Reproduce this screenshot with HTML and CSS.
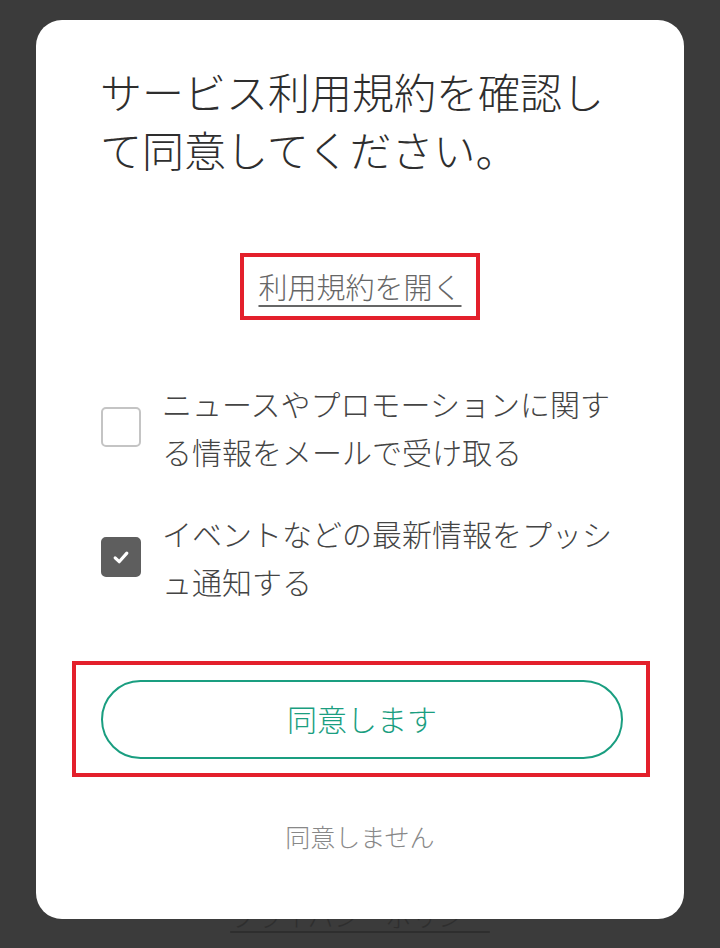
FILE: index.html
```html
<!DOCTYPE html>
<html lang="ja">
<head>
  <meta charset="UTF-8">
  <title>利用規約の確認</title>
  <link rel="stylesheet" href="styles.css">
</head>
<body>

  <div class="backdrop-page">
    <a class="policy-link">プライバシーポリシー</a>
  </div>

  <div class="terms-dialog">
    <h1>サービス利用規約を確認して同意してください。</h1>

    <div class="open-terms">
      <span class="highlight-box"><a class="terms-link">利用規約を開く</a></span>
    </div>

    <div class="option-list">
      <label class="option">
        <span class="check"></span>
        <span class="option-text">ニュースやプロモーションに関する情報をメールで受け取る</span>
      </label>
      <label class="option">
        <span class="check checked">
          <svg viewBox="0 0 16 16" width="18" height="18"><path d="M2.8 8.8 L6.4 12.2 L13.2 4.6" fill="none" stroke="#fff" stroke-width="2.8" stroke-linecap="round" stroke-linejoin="round"/></svg>
        </span>
        <span class="option-text">イベントなどの最新情報をプッシュ通知する</span>
      </label>
    </div>

    <div class="agree-box">
      <button class="agree-btn">同意します</button>
    </div>

    <button class="decline-btn">同意しません</button>
  </div>

</body>
</html>
```

FILE: styles.css
```css
html, body {
  margin: 0;
  height: 100%;
  font-family: "Noto Sans CJK JP", "Noto Sans", sans-serif;
  font-weight: 300;
  background-color: #3b3b3b;
  color: #333;
  overflow: hidden;
}

body {
  position: relative;
}

.backdrop-page {
  position: absolute;
  left: 0;
  right: 0;
  top: 898px;
  text-align: center;
}

.policy-link {
  font-size: 26px;
  line-height: 36px;
  color: #2e2e2e;
  text-decoration: underline;
  text-underline-offset: 4px;
}

.terms-dialog {
  position: relative;
  margin: 20px 36px 0;
  height: 899px;
  box-sizing: border-box;
  padding: 42px 64px 0;
  background: #fff;
  border-radius: 26px;
  display: flex;
  flex-direction: column;
}

.terms-dialog h1 {
  margin: 0;
  font-size: 42px;
  line-height: 58px;
  font-weight: 300;
  color: #2e2e2e;
}

.open-terms {
  margin-top: 75px;
  text-align: center;
}

.highlight-box {
  display: inline-block;
  border: 4px solid #e3202b;
  padding: 12px 14px;
}

.terms-link {
  font-size: 29px;
  line-height: 34px;
  color: #666;
  text-decoration: underline;
  text-decoration-thickness: 2px;
  text-underline-offset: 6px;
}

.option-list {
  margin-top: 59px;
  display: flex;
  flex-direction: column;
  gap: 34px;
}

.option {
  display: flex;
  align-items: center;
  gap: 21px;
}

.check {
  flex: none;
  width: 40px;
  height: 40px;
  margin-left: 1px;
  box-sizing: border-box;
  border: 2px solid #c4c4c4;
  border-radius: 5px;
  display: flex;
  align-items: center;
  justify-content: center;
}

.check.checked {
  background: #5e5e5e;
  border-color: #5e5e5e;
}

.check svg {
  display: block;
}

.option-text {
  font-size: 30px;
  line-height: 48px;
  color: #444;
}

.agree-box {
  margin: 56px -30px 0 -28px;
  border: 4px solid #e3202b;
  padding: 15px 23px 14px 25px;
}

.agree-btn {
  display: block;
  width: 100%;
  height: 79px;
  border: 2px solid #1a9e80;
  border-radius: 40px;
  background: #fff;
  color: #1a9e80;
  font-family: inherit;
  font-weight: 300;
  font-size: 30px;
  padding-bottom: 4px;
}

.decline-btn {
  margin-top: 40px;
  align-self: center;
  border: none;
  background: none;
  font-family: inherit;
  font-weight: 300;
  font-size: 25px;
  line-height: 36px;
  color: #888;
}
```
